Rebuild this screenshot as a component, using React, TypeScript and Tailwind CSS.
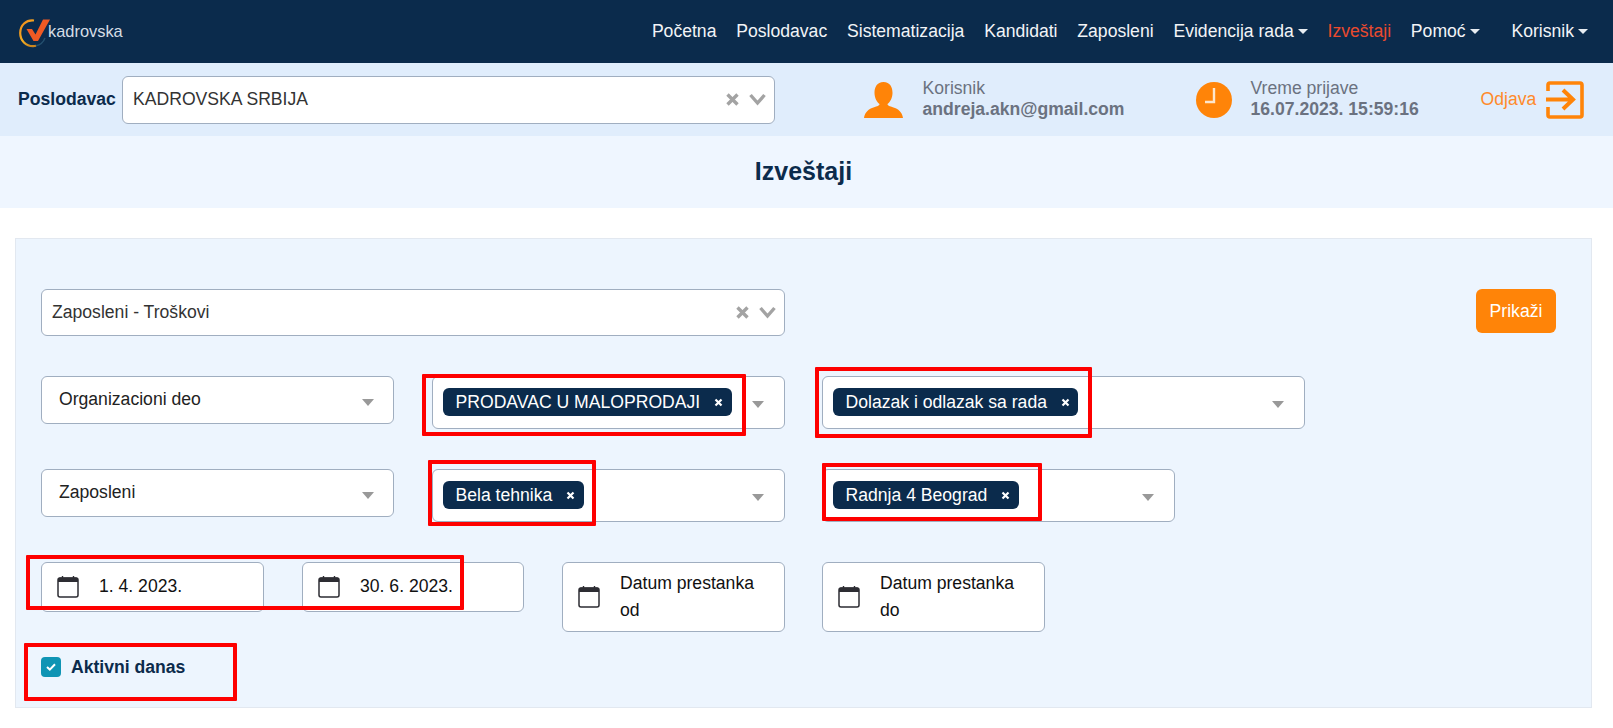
import React from 'react';

const ORANGE = '#ff8408';

const navItems = [
  { label: 'Početna' },
  { label: 'Poslodavac' },
  { label: 'Sistematizacija' },
  { label: 'Kandidati' },
  { label: 'Zaposleni' },
  { label: 'Evidencija rada', caret: true },
  { label: 'Izveštaji', active: true },
  { label: 'Pomoć', caret: true },
];

const Caret = () => (
  <span className="ml-[4px] mt-[1px] inline-block h-0 w-0 border-x-[5px] border-t-[5px] border-x-transparent border-t-[#e8edf2]" />
);

const Logo = () => (
  <div className="flex items-center">
    <svg width="32" height="30" viewBox="0 0 32 30" className="mt-[2px] shrink-0">
      <defs>
        <linearGradient id="arc" x1="0" y1="0" x2="0.7" y2="1">
          <stop offset="0" stopColor="#f08a1d" />
          <stop offset="0.6" stopColor="#f5ae22" />
          <stop offset="1" stopColor="#c9851f" />
        </linearGradient>
      </defs>
      <path d="M15 2.5 C7 1.5 1.2 7.5 1.2 15 C1.2 22.5 7 28.2 14 28.2 C15 28.2 16 28.1 17 27.8" fill="none" stroke="url(#arc)" strokeWidth="2.2" />
      <path d="M17 27.8 C21 27 24.5 24 26 20" fill="none" stroke="#24506f" strokeWidth="1.4" />
      <path d="M7.5 11 L13 11 L16.5 16.5 L24 1.5 L31 1.5 L19 23 L14.5 23 Z" fill="#ee5a24" />
    </svg>
    <span className="-ml-[3px] text-[16.4px] text-[#d5dde5]">kadrovska</span>
  </div>
);

const ClearIcon = () => (
  <svg width="13" height="13" viewBox="0 0 13 13" className="shrink-0">
    <path d="M1.5 1.5 L11.5 11.5 M11.5 1.5 L1.5 11.5" stroke="#a3a3a3" strokeWidth="3.4" />
  </svg>
);

const ChevronIcon = () => (
  <svg width="17" height="13" viewBox="0 0 17 13" className="shrink-0">
    <path d="M1.5 2 L8.5 10 L15.5 2" fill="none" stroke="#a3a3a3" strokeWidth="3.4" />
  </svg>
);

const SingleSelect = ({ value, className }: { value: string; className: string }) => (
  <div className={`flex items-center rounded-[6px] border border-[#a0aec0] bg-white pl-[10px] pr-[8px] text-[17.6px] text-[#333] ${className}`}>
    <span className="flex-1">{value}</span>
    <div className="flex items-center gap-[10px]">
      <ClearIcon />
      <ChevronIcon />
    </div>
  </div>
);

const Arrow = () => (
  <span className="h-0 w-0 shrink-0 border-x-[6px] border-t-[7px] border-x-transparent border-t-[#999]" />
);

const PlainSelect = ({ label }: { label: string }) => (
  <div className="flex h-[48px] w-[353px] items-center justify-between rounded-[6px] border border-[#a0aec0] bg-white pl-[17px] pr-[19px] text-[17.6px] text-[#222]">
    <span className="-mt-[2px]">{label}</span>
    <span className="mt-[4px] flex"><Arrow /></span>
  </div>
);

const TagSelect = ({ tag, className }: { tag: string; className: string }) => (
  <div className={`flex h-[53px] items-center justify-between rounded-[6px] border border-[#a0aec0] bg-white pl-[10px] pr-[20px] ${className}`}>
    <span className="-mt-[1px] flex h-[28px] items-center rounded-[6px] bg-[#0b2b4c] pl-[12.5px] pr-[8.5px] text-[17.6px] text-white">
      {tag}
      <svg width="9" height="9" viewBox="0 0 9 9" className="ml-[14px]">
        <path d="M1.5 1.5 L7.5 7.5 M7.5 1.5 L1.5 7.5" stroke="#fff" strokeWidth="2.2" />
      </svg>
    </span>
    <span className="mt-[4px] flex"><Arrow /></span>
  </div>
);

const CalendarIcon = () => (
  <svg width="22" height="22" viewBox="0 0 22 22" className="shrink-0">
    <rect x="1" y="2" width="20" height="19" rx="2" fill="#fff" stroke="#2d2d33" strokeWidth="1.5" />
    <path d="M1 3.5 a2 2 0 0 1 2 -2 h16 a2 2 0 0 1 2 2 V6 H1 Z" fill="#2d2d33" />
    <path d="M5.5 0 V2 M16.5 0 V2" stroke="#2d2d33" strokeWidth="1.4" />
  </svg>
);

const DateField = ({ text, tall, className }: { text: string; tall?: boolean; className: string }) => (
  <div className={`flex items-center rounded-[6px] border border-[#a0aec0] bg-white pl-[15px] ${tall ? 'h-[70px]' : 'h-[50px]'} ${className}`}>
    <CalendarIcon />
    <span className={`pl-[20px] text-[17.6px] leading-[27px] text-[#111] ${tall ? 'pr-[20px]' : '-mt-[1px]'}`}>{text}</span>
  </div>
);

const RedBox = ({ className }: { className: string }) => (
  <div className={`pointer-events-none absolute rounded-[1px] border-[4px] border-[#fe0000] ${className}`} />
);

export default function App() {
  return (
    <div className="relative min-h-[728px] w-[1613px] overflow-hidden bg-white font-['Liberation_Sans',Arial,sans-serif]">
      {/* Navbar */}
      <nav className="flex h-[63px] items-center justify-between bg-[#0b2b4c] pl-[19px] pr-[25px]">
        <Logo />
        <div className="flex items-center gap-[19.8px] text-[17.6px] text-[#f2f4f7]">
          {navItems.map((item) => (
            <a key={item.label} className={`flex items-center ${item.active ? 'text-[#ea4a2e]' : ''}`}>
              {item.label}
              {item.caret && <Caret />}
            </a>
          ))}
          <a className="ml-[12px] flex items-center">
            Korisnik
            <Caret />
          </a>
        </div>
      </nav>

      {/* Employer bar */}
      <div className="flex h-[73px] items-center bg-[#e0edfc] pl-[18px] text-[17.6px]">
        <span className="w-[104px] font-bold text-[#0b2b4c]">Poslodavac</span>
        <SingleSelect value="KADROVSKA SRBIJA" className="h-[48px] w-[652.5px]" />
        <svg width="39" height="36" viewBox="0 0 39 36" className="ml-[89px] shrink-0">
          <path d="M19.5 0 C26 0 28.5 5 28.5 11 C28.5 16 26 20 23.5 22 C23.5 24 27 24.5 31 26 C36 28 38.5 32 39 36 H0 C0.5 32 3 28 8 26 C12 24.5 15.5 24 15.5 22 C13 20 10.5 16 10.5 11 C10.5 5 13 0 19.5 0 Z" fill={ORANGE} />
        </svg>
        <div className="ml-[20px] w-[273px] text-[#6b7280]">
          <div className="-mt-[1px] leading-[21px]">Korisnik</div>
          <div className="font-bold leading-[21px]">andreja.akn@gmail.com</div>
        </div>
        <svg width="36" height="36" viewBox="0 0 36 36" className="shrink-0">
          <circle cx="18" cy="18" r="18" fill={ORANGE} />
          <path d="M18 6 V20 H9" fill="none" stroke="#fde6cc" strokeWidth="2.4" />
        </svg>
        <div className="ml-[19px] w-[230px] text-[#6b7280]">
          <div className="-mt-[1px] leading-[21px]">Vreme prijave</div>
          <div className="font-bold leading-[21px]">16.07.2023. 15:59:16</div>
        </div>
        <span className="text-[#ff8a2b]">Odjava</span>
        <svg width="38" height="38" viewBox="0 0 38 38" className="ml-[10px] shrink-0">
          <path d="M2 10 V4 a2 2 0 0 1 2 -2 H34 a2 2 0 0 1 2 2 V34 a2 2 0 0 1 -2 2 H4 a2 2 0 0 1 -2 -2 V26" fill="none" stroke={ORANGE} strokeWidth="3.6" />
          <path d="M0 18.5 H26 M17 9 L27 18.5 L17 28" fill="none" stroke={ORANGE} strokeWidth="4" />
        </svg>
      </div>

      {/* Title */}
      <div className="flex h-[72px] items-center justify-center bg-[#eff6ff] pr-[6px]">
        <h1 className="-mt-[1px] text-[25px] font-bold text-[#0b2b4c]">Izveštaji</h1>
      </div>

      {/* Report filters */}
      <div className="ml-[15px] mt-[30px] w-[1577px] border border-[#e2e8f0] bg-[#edf5fe] pb-[30px] pl-[25px] pt-[50px]">
        <div className="flex items-start justify-between pr-[35px]">
          <SingleSelect value="Zaposleni - Troškovi" className="h-[47px] w-[744px]" />
          <button className="h-[44px] w-[80px] rounded-[6px] bg-[#ff8408] text-[17.6px] text-white">Prikaži</button>
        </div>

        <div className="mt-[40px] flex items-start">
          <PlainSelect label="Organizacioni deo" />
          <TagSelect tag="PRODAVAC U MALOPRODAJI" className="ml-[38px] w-[353px]" />
          <TagSelect tag="Dolazak i odlazak sa rada" className="ml-[37px] w-[483px]" />
        </div>

        <div className="mt-[40px] flex items-start">
          <PlainSelect label="Zaposleni" />
          <TagSelect tag="Bela tehnika" className="ml-[38px] w-[353px]" />
          <TagSelect tag="Radnja 4 Beograd" className="ml-[37px] w-[353px]" />
        </div>

        <div className="mt-[40px] flex items-start">
          <DateField text="1. 4. 2023." className="w-[223px]" />
          <DateField text="30. 6. 2023." className="ml-[38px] w-[222px]" />
          <DateField text="Datum prestanka od" tall className="ml-[38px] w-[223px]" />
          <DateField text="Datum prestanka do" tall className="ml-[37px] w-[223px]" />
        </div>

        <label className="mt-[25px] flex h-[20px] items-center">
          <span className="flex h-[20px] w-[20px] items-center justify-center rounded-[4px] bg-[#0f94b4]">
            <svg width="10" height="8" viewBox="0 0 10 8">
              <path d="M1 4 L3.8 6.6 L9 1.2" fill="none" stroke="#fff" strokeWidth="2" />
            </svg>
          </span>
          <span className="ml-[10px] text-[17.6px] font-bold text-[#0b2b4c]">Aktivni danas</span>
        </label>
      </div>

      {/* Red annotations over the screenshot */}
      <RedBox className="left-[422px] top-[374px] h-[62px] w-[324px]" />
      <RedBox className="left-[815px] top-[367px] h-[71px] w-[277px]" />
      <RedBox className="left-[428px] top-[460px] h-[66px] w-[168px]" />
      <RedBox className="left-[822px] top-[463px] h-[58px] w-[220px]" />
      <RedBox className="left-[26px] top-[555px] h-[55px] w-[438px]" />
      <RedBox className="left-[24px] top-[643px] h-[58px] w-[213px]" />
    </div>
  );
}
